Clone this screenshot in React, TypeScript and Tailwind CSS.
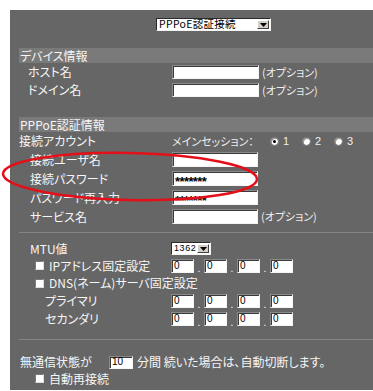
import React from "react";

const box =
  "box-border bg-white border border-t-[#8a8a8a] border-l-[#8a8a8a] border-b-[#f4f4f4] border-r-[#f4f4f4] shadow-[inset_1px_1px_0_#3a3a3a]";

function TextBox({ w, h, children }: { w: string; h: string; children?: React.ReactNode }) {
  return (
    <div className={`${box} ${w} ${h} flex items-center pl-[2px] text-black text-[10px] leading-none font-['Liberation_Sans',sans-serif]`}>
      {children}
    </div>
  );
}

function Arrow() {
  return (
    <svg width="7" height="4" viewBox="0 0 7 4">
      <polygon points="0,0 7,0 3.5,4" fill="#000" />
    </svg>
  );
}

function Select({ w, label, small }: { w: string; label: string; small?: boolean }) {
  return (
    <div className={`${w} h-[13px] box-border bg-white border border-t-[#2a2a2a] border-l-[#2a2a2a] border-b-[#f4f4f4] border-r-[#f4f4f4] flex items-stretch`}>
      <div
        className={`flex-1 min-w-0 flex items-center pl-[2px] text-black leading-none whitespace-nowrap ${
          small ? "font-['Liberation_Sans',sans-serif] text-[9px] tracking-[0.6px]" : "text-[10.5px] tracking-[0.3px]"
        }`}
      >
        {label}
      </div>
      <div className="w-[12px] shrink-0 my-[1px] mr-[1px] box-border bg-[#d4d0c8] border border-t-[#ffffff] border-l-[#ffffff] border-b-[#404040] border-r-[#404040] flex items-center justify-center">
        <Arrow />
      </div>
    </div>
  );
}

function Check() {
  return (
    <div className="w-[9px] h-[9px] box-border bg-white border border-t-[#7a7a7a] border-l-[#7a7a7a] border-b-[#dcdcdc] border-r-[#dcdcdc]" />
  );
}

function Radio({ on, n }: { on?: boolean; n: string }) {
  return (
    <div className="w-[32px] flex items-center">
      <div className="w-[9px] h-[9px] rounded-full bg-white border border-[#6e6e6e] shadow-[inset_1px_1px_0_#9a9a9a] flex items-center justify-center">
        {on && <div className="w-[3px] h-[3px] rounded-full bg-black" />}
      </div>
      <span className="ml-[4px] text-[11px] text-[#f0f0f0] font-['Liberation_Sans',sans-serif]">{n}</span>
    </div>
  );
}

function Dot() {
  return <span className="w-[10px] text-center text-[10px] leading-none pt-[5px]">.</span>;
}

function IpRow() {
  return (
    <div className="flex items-center">
      <TextBox w="w-[23px]" h="h-[14px]">0</TextBox>
      <Dot />
      <TextBox w="w-[23px]" h="h-[14px]">0</TextBox>
      <Dot />
      <TextBox w="w-[23px]" h="h-[14px]">0</TextBox>
      <Dot />
      <TextBox w="w-[23px]" h="h-[14px]">0</TextBox>
    </div>
  );
}

function Stars() {
  return <span className="text-[13px] tracking-[-0.6px] pt-[5px] font-bold">*******</span>;
}

const opt = "ml-[3px] text-[11px] text-[#eeeeee]";

export default function App() {
  return (
    <div className="relative w-[373px] h-[391px] bg-white font-['Noto_Sans_CJK_JP','Noto_Sans',sans-serif] text-[12px] leading-none text-[#f6f6f6] [font-feature-settings:'palt']">
      <div className="ml-[10px] mt-[10px] h-[380px] bg-[#666666] pl-[9px] pt-[8px] flex flex-col">
        {/* connection type select */}
        <div className="flex pl-[137px]">
          <Select w="w-[115px]" label="PPPoE認証接続" />
        </div>

        {/* device info */}
        <div className="mt-[17px] h-[15px] bg-[#7a7a7a] flex items-center pl-[1px]">デバイス情報</div>
        <div className="h-[18px] flex items-center">
          <div className="w-[153px] pl-[9px]">ホスト名</div>
          <TextBox w="w-[87px]" h="h-[14px]" />
          <span className={opt}>(オプション)</span>
        </div>
        <div className="h-[18px] flex items-center">
          <div className="w-[153px] pl-[9px]">ドメイン名</div>
          <TextBox w="w-[87px]" h="h-[14px]" />
          <span className={opt}>(オプション)</span>
        </div>

        <div className="h-[18px]" />

        {/* PPPoE info */}
        <div className="h-[15px] bg-[#7a7a7a] flex items-center pl-[1px]">PPPoE認証情報</div>
        <div className="h-[18px] flex items-center">
          <div className="w-[153px]">接続アカウント</div>
          <div className="w-[98px] text-[11px] text-[#eeeeee]">メインセッション：</div>
          <Radio on n="1" />
          <Radio n="2" />
          <Radio n="3" />
        </div>
        <div className="h-[19px] flex items-center">
          <div className="w-[153px] pl-[11px]">接続ユーザ名</div>
          <TextBox w="w-[86px]" h="h-[15px]" />
        </div>
        <div className="h-[19px] flex items-center">
          <div className="w-[153px] pl-[11px]">接続パスワード</div>
          <TextBox w="w-[86px]" h="h-[15px]">
            <Stars />
          </TextBox>
        </div>
        <div className="h-[19px] flex items-center">
          <div className="w-[153px] pl-[11px]">パスワード再入力</div>
          <TextBox w="w-[86px]" h="h-[15px]">
            <Stars />
          </TextBox>
        </div>
        <div className="h-[19px] flex items-center">
          <div className="w-[153px] pl-[11px]">サービス名</div>
          <TextBox w="w-[86px]" h="h-[15px]" />
          <span className={opt}>(オプション)</span>
        </div>

        <div className="mt-[6px] h-[1px] bg-[#858585]" />

        {/* network */}
        <div className="mt-[7px] h-[17px] flex items-center">
          <div className="w-[152px] pl-[11px]">MTU値</div>
          <Select w="w-[40px]" label="1362" small />
        </div>
        <div className="h-[17px] flex items-center">
          <div className="w-[152px] pl-[16px] flex items-center">
            <Check />
            <span className="ml-[5px]">IPアドレス固定設定</span>
          </div>
          <IpRow />
        </div>
        <div className="h-[18px] flex items-center">
          <div className="pl-[16px] flex items-center">
            <Check />
            <span className="ml-[5px]">DNS(ネーム)サーバ固定設定</span>
          </div>
        </div>
        <div className="h-[18px] flex items-center">
          <div className="w-[152px] pl-[26px]">プライマリ</div>
          <IpRow />
        </div>
        <div className="h-[18px] flex items-center">
          <div className="w-[152px] pl-[26px]">セカンダリ</div>
          <IpRow />
        </div>

        <div className="mt-[11px] h-[1px] bg-[#858585]" />

        {/* idle disconnect */}
        <div className="mt-[13px] h-[18px] flex items-center">
          <div className="w-[90px] pl-[1px]">無通信状態が</div>
          <TextBox w="w-[24px]" h="h-[13px]">10</TextBox>
          <span className="ml-[4px]">分間 続いた場合は、自動切断します。</span>
        </div>
        <div className="h-[15px] flex items-center">
          <div className="pl-[16px] flex items-center">
            <Check />
            <span className="ml-[5px]">自動再接続</span>
          </div>
        </div>
      </div>

      {/* red highlight ellipse */}
      <svg
        className="absolute left-0 top-0 pointer-events-none"
        width="373"
        height="391"
        viewBox="0 0 373 391"
      >
        <ellipse
          cx="130"
          cy="166.5"
          rx="127"
          ry="23.5"
          transform="rotate(1.2 130 166.5)"
          fill="none"
          stroke="#e3101a"
          strokeWidth="2.5"
        />
      </svg>
    </div>
  );
}
